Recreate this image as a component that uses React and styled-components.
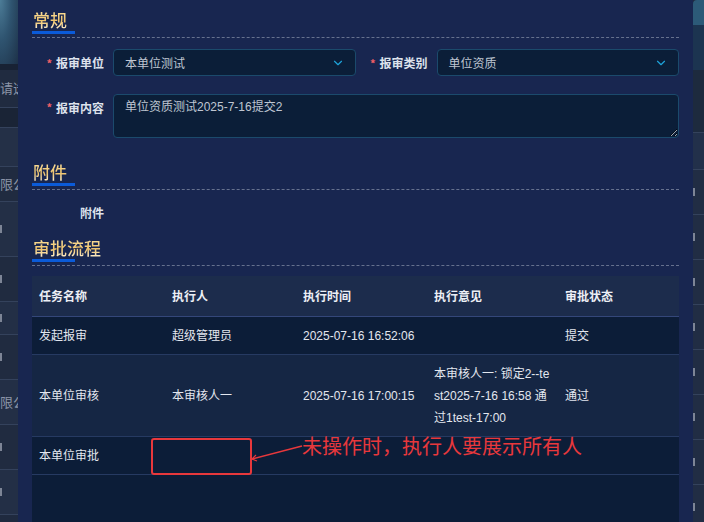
import React from 'react'
import styled, { createGlobalStyle } from 'styled-components'
import { ChevronDown } from 'lucide-react'

const GlobalStyle = createGlobalStyle`
  html, body {
    margin: 0;
    padding: 0;
    width: 704px;
    height: 522px;
    overflow: hidden;
    background: #141d30;
  }
  * { box-sizing: border-box; }
  body {
    font-family: "Liberation Sans", "Noto Sans CJK SC", sans-serif;
  }
`

const Page = styled.div`
  display: flex;
  width: 704px;
  height: 522px;
  overflow: hidden;
`

const Strip = styled.div`
  display: flex;
  flex-direction: column;
  width: ${p => p.w}px;
  flex-shrink: 0;
  overflow: hidden;
  background: #1f2a3f;
`

const StripCell = styled.div`
  height: ${p => p.h}px;
  flex-shrink: 0;
  background: ${p => p.bg || '#212d44'};
  border-bottom: 1px solid #34425c;
  color: #8c95a8;
  font-size: 13px;
  line-height: ${p => p.h}px;
  white-space: nowrap;
  overflow: hidden;
  position: relative;
`

const Mark = styled.span`
  display: block;
  position: absolute;
  left: 0;
  top: 50%;
  width: 2px;
  height: 8px;
  margin-top: -4px;
  background: #7d8596;
`

const Banner = styled.div`
  height: 70px;
  flex-shrink: 0;
  background: radial-gradient(ellipse at 0% 0%, #4d7d98 0%, #2f5470 45%, #1d3148 100%);
  border-bottom: 6px solid #182234;
`

const Modal = styled.div`
  width: 675px;
  flex-shrink: 0;
  background: #182650;
  padding: 0 14px;
  display: flex;
  flex-direction: column;
`

const SectionHead = styled.div`
  padding-top: 10px;
  border-bottom: 1px dashed #66718e;
  padding-bottom: 3px;
  margin-top: ${p => p.top || 0}px;
`

const SectionTitle = styled.div`
  display: inline-block;
  font-family: "Noto Sans CJK SC", sans-serif;
  font-size: 17px;
  line-height: 20px;
  font-weight: 500;
  background: linear-gradient(180deg, #fbe2a2 0%, #efc46c 55%, #fff3d8 100%);
  -webkit-background-clip: text;
  background-clip: text;
  color: transparent;
  margin-left: 1px;
`

const TitleBar = styled.div`
  width: 43px;
  height: 3px;
  background: #0b5bd9;
`

const FormGrid = styled.div`
  display: grid;
  grid-template-columns: 81px 1fr 81px 1fr;
  row-gap: 18px;
  margin-top: 11px;
  align-items: start;
`

const Label = styled.div`
  width: ${p => (p.fixed ? '81px' : 'auto')};
  height: ${p => p.h || 27}px;
  display: flex;
  align-items: ${p => (p.top ? 'flex-start' : 'center')};
  justify-content: flex-end;
  padding-right: 9px;
  padding-top: ${p => (p.top ? 5 : 0)}px;
  font-size: 12px;
  font-weight: 700;
  color: #dde2ec;
  font-family: "Noto Sans CJK SC", sans-serif;
`

const Star = styled.span`
  color: #f25f66;
  font-size: 11px;
  margin-right: 4px;
  font-weight: 700;
`

const Select = styled.div`
  height: 27px;
  display: flex;
  align-items: center;
  justify-content: space-between;
  padding: 0 10px 0 11px;
  background: #0b1e38;
  border: 1px solid #1b4a6c;
  border-radius: 4px;
  color: #bfc6d2;
  font-size: 12px;
`

const TextArea = styled.textarea`
  grid-column: 2 / 5;
  height: 44px;
  resize: vertical;
  background: #0b1e38;
  border: 1px solid #1b4a6c;
  border-radius: 4px;
  color: #bfc6d2;
  font-size: 12px;
  font-family: "Liberation Sans", "Noto Sans CJK SC", sans-serif;
  padding: 2px 11px;
  line-height: 20px;
  outline: none;
`

const AttachRow = styled.div`
  display: flex;
  margin: 9px 0 3px;
`

const TableWrap = styled.div`
  position: relative;
  margin-top: 10px;
  flex: 1;
  background: #0c1d38;
`

const Table = styled.table`
  width: 100%;
  border-collapse: collapse;
  table-layout: fixed;
  font-size: 12px;
`

const Th = styled.th`
  width: ${p => p.w}px;
  text-align: left;
  background: #1c2c4c;
  color: #eceff5;
  font-weight: 700;
  font-family: "Noto Sans CJK SC", sans-serif;
  padding: 8px 7px;
  line-height: 24px;
  border-bottom: 1px solid #34477a;
`

const Tr = styled.tr`
  background: ${p => (p.striped ? '#152644' : '#0c1d38')};
`

const Td = styled.td`
  padding: 8px 7px 7px;
  line-height: 22px;
  color: #e3e7ef;
  border-bottom: 1px solid #263a62;
  white-space: pre-line;
  vertical-align: middle;
`

const Callout = styled.div`
  position: absolute;
  left: 119px;
  top: 162px;
  width: 101px;
  height: 37px;
  border: 2px solid #e8383c;
  border-radius: 3px;
`

const CalloutText = styled.div`
  position: absolute;
  left: 270px;
  top: 157px;
  font-size: 20px;
  line-height: 26px;
  color: #e8383c;
  font-family: "Noto Sans CJK SC", sans-serif;
  white-space: nowrap;
`

const CalloutLine = styled.svg`
  position: absolute;
  left: 218px;
  top: 166px;
  overflow: visible;
`

const RightTop = styled.div`
  height: 70px;
  flex-shrink: 0;
  background: #1c3450;
  border-top: 25px solid #2c5a78;
  border-top-left-radius: 4px;
`

const rows = [
  { task: '发起报审', who: '超级管理员', time: '2025-07-16 16:52:06', note: '', state: '提交' },
  {
    task: '本单位审核',
    who: '本审核人一',
    time: '2025-07-16 17:00:15',
    note: '本审核人一: 锁定2--te\nst2025-7-16 16:58 通\n过1test-17:00',
    state: '通过',
  },
  { task: '本单位审批', who: '', time: '', note: '', state: '' },
]

const leftCells = [
  { h: 38, text: '请选', bg: '#202b40' },
  { h: 20, bg: '#1a2436' },
  { h: 39, bg: '#243047' },
  { h: 35, text: '限公', bg: '#202b40' },
  { h: 55, bg: '#232f46', mark: true },
  { h: 45, bg: '#202b40', mark: true },
  { h: 33, bg: '#232f46', mark: true },
  { h: 45, bg: '#202b40', mark: true },
  { h: 45, text: '限公', bg: '#232f46' },
  { h: 45, bg: '#202b40', mark: true },
  { h: 45, bg: '#232f46', mark: true },
]

const rightCells = [
  { h: 63, bg: '#1d2a3e' },
  { h: 37, bg: '#22304a' },
  { h: 45, mark: true },
  { h: 45, mark: true },
  { h: 45, mark: true },
  { h: 45, mark: true },
  { h: 45, mark: true },
  { h: 45, mark: true },
  { h: 45, mark: true },
  { h: 45, mark: true },
]

const App = () => {
  return (
    <Page>
      <GlobalStyle />
      <Strip w={18}>
        <Banner />
        {leftCells.map((c, i) => (
          <StripCell key={i} h={c.h} bg={c.bg}>
            {c.text}
            {c.mark && <Mark />}
          </StripCell>
        ))}
      </Strip>

      <Modal>
        <SectionHead>
          <SectionTitle>常规</SectionTitle>
          <TitleBar />
        </SectionHead>
        <FormGrid>
          <Label><Star>*</Star>报审单位</Label>
          <Select>
            本单位测试
            <ChevronDown size={14} color="#1ea3d9" strokeWidth={2} />
          </Select>
          <Label><Star>*</Star>报审类别</Label>
          <Select>
            单位资质
            <ChevronDown size={14} color="#1ea3d9" strokeWidth={2} />
          </Select>
          <Label h={44} top><Star>*</Star>报审内容</Label>
          <TextArea defaultValue="单位资质测试2025-7-16提交2" readOnly />
        </FormGrid>

        <SectionHead top={14}>
          <SectionTitle>附件</SectionTitle>
          <TitleBar />
        </SectionHead>
        <AttachRow>
          <Label h={26} fixed>附件</Label>
        </AttachRow>

        <SectionHead>
          <SectionTitle>审批流程</SectionTitle>
          <TitleBar />
        </SectionHead>
        <TableWrap>
          <Table>
            <thead>
              <tr>
                <Th w={133}>任务名称</Th>
                <Th w={131}>执行人</Th>
                <Th w={131}>执行时间</Th>
                <Th w={131}>执行意见</Th>
                <Th>审批状态</Th>
              </tr>
            </thead>
            <tbody>
              {rows.map((r, i) => (
                <Tr key={i} striped={i % 2 === 1}>
                  <Td>{r.task}</Td>
                  <Td>{r.who}</Td>
                  <Td>{r.time}</Td>
                  <Td>{r.note}</Td>
                  <Td>{r.state}</Td>
                </Tr>
              ))}
            </tbody>
          </Table>
          <Callout />
          <CalloutLine width="52" height="20">
            <line x1="2" y1="17" x2="52" y2="4" stroke="#e8383c" strokeWidth="1.5" />
            <polyline points="6,13 2,17 7,19" fill="none" stroke="#e8383c" strokeWidth="1.2" />
          </CalloutLine>
          <CalloutText>未操作时，执行人要展示所有人</CalloutText>
        </TableWrap>
      </Modal>

      <Strip w={11}>
        <RightTop />
        {rightCells.map((c, i) => (
          <StripCell key={i} h={c.h} bg={c.bg}>
            {c.mark && <Mark />}
          </StripCell>
        ))}
      </Strip>
    </Page>
  )
}

export default App
